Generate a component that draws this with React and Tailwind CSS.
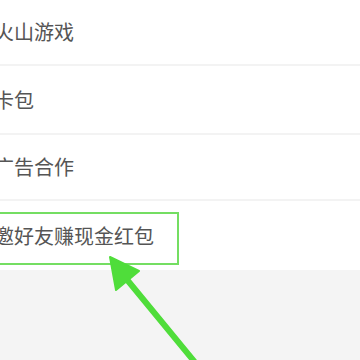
export default function App() {
  const rows = [
    { t: "火山游戏", h: "h-[64px]" },
    { t: "卡包", h: "h-[67px]" },
    { t: "广告合作", h: "h-[64px]" },
    { t: "邀好友赚现金红包", h: "h-[69px]" },
  ];
  return (
    <div
      className="relative w-[360px] h-[360px] overflow-hidden bg-[#f4f4f4]"
      style={{ fontFamily: '"Noto Sans CJK SC", "Noto Sans", sans-serif' }}
    >
      <div className="flex flex-col bg-white">
        {rows.map((r, i) => (
          <div key={i} className="flex flex-col">
            {i > 0 && <div className="h-[2px] bg-[#f3f3f3]" />}
            <div className={`${r.h} flex items-center -ml-[6px] text-[20px] text-[#555555] leading-none`}>
              {r.t}
            </div>
          </div>
        ))}
      </div>
      <div className="absolute left-[-10px] top-[212px] w-[189px] h-[53px] border-2 border-[#74de62]" />
      <svg className="absolute left-0 top-0" width="360" height="360" viewBox="0 0 360 360">
        <line x1="124" y1="276" x2="198" y2="366" stroke="#4fdd3a" strokeWidth="6" strokeLinecap="round" />
        <polygon points="110,257 139,271 116,290" fill="#4fdd3a" stroke="#4fdd3a" strokeWidth="2" strokeLinejoin="round" />
      </svg>
    </div>
  );
}
